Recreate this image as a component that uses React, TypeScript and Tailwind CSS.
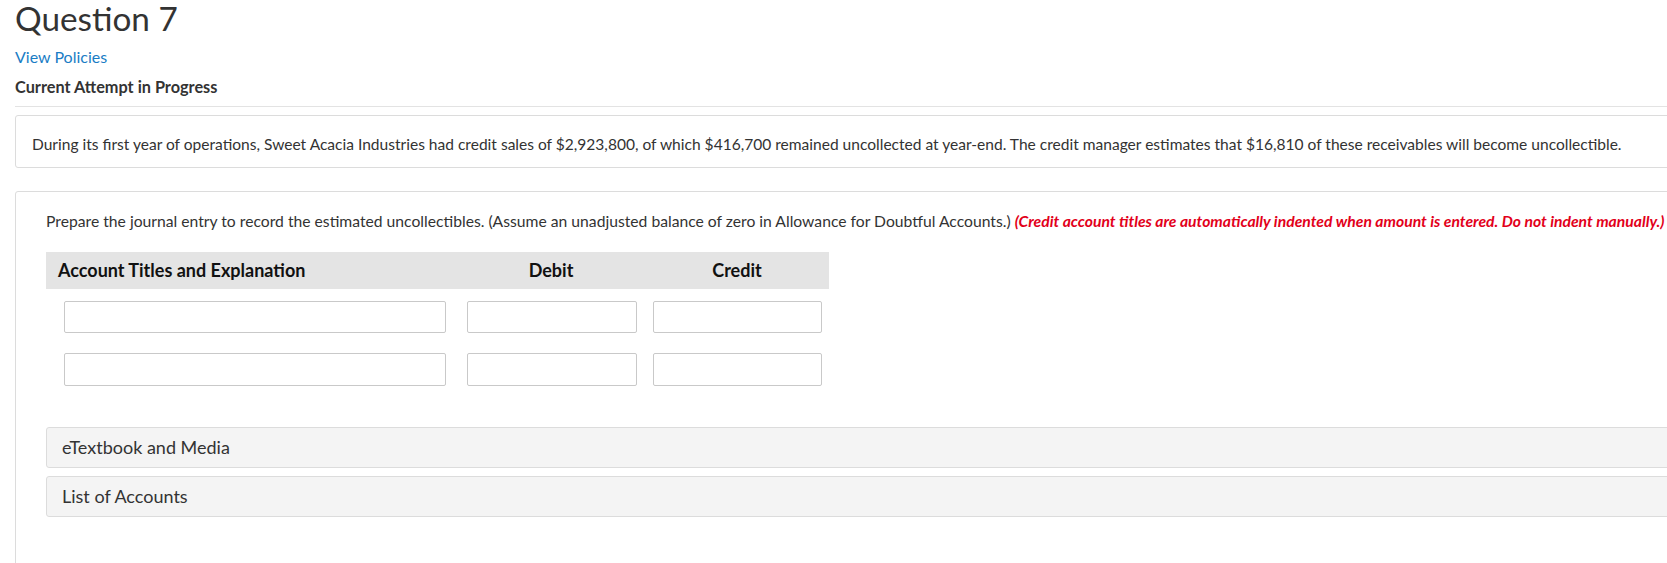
import React from "react";

export default function App() {
  return (
    <div className="w-[1667px] h-[563px] overflow-hidden bg-white font-['Lato','Liberation_Sans',sans-serif] text-[#333]">
      <div className="w-[1720px] pl-[15px] pt-[1px]">
        <h1 className="text-[33.3px] leading-[34px] font-normal text-[#333]">Question 7</h1>
        <div className="mt-[12px] text-[16px] leading-[20px] text-[#1a7dc5]">View Policies</div>
        <div className="mt-[10px] text-[16.3px] leading-[20px] font-bold text-[#333]">Current Attempt in Progress</div>
        <div className="mt-[9px] border-t border-[#e3e3e3]" />

        <div className="mt-[8px] border border-[#dcdcdc] rounded-[3px] pl-[16px] pt-[18px] pb-[13px] text-[15.55px] leading-[20px] whitespace-nowrap">
          During its first year of operations, Sweet Acacia Industries had credit sales of $2,923,800, of which $416,700 remained uncollected at year-end. The credit manager estimates that $16,810 of these receivables will become uncollectible.
        </div>

        <div className="mt-[23px] border border-[#dcdcdc] rounded-[3px] pl-[30px] pt-[19px] pb-[60px]">
          <div className="text-[15.7px] leading-[20px] whitespace-nowrap">
            Prepare the journal entry to record the estimated uncollectibles. (Assume an unadjusted balance of zero in Allowance for Doubtful Accounts.){" "}
            <span className="italic font-bold text-[#e2001a]">
              (Credit account titles are automatically indented when amount is entered. Do not indent manually.)
            </span>
          </div>

          <div className="mt-[21px] w-[783px] h-[37px] bg-[#e4e4e4] flex items-center text-[18px] font-bold text-[#111]">
            <div className="w-[411px] pl-[12px]">Account Titles and Explanation</div>
            <div className="w-[188px] text-center">Debit</div>
            <div className="w-[184px] text-center">Credit</div>
          </div>

          <div className="mt-[12px] flex pl-[18px]">
            <div className="w-[382px] h-[32px] border border-[#c9c9c9] rounded-[2px] bg-white" />
            <div className="ml-[21px] w-[170px] h-[32px] border border-[#c9c9c9] rounded-[2px] bg-white" />
            <div className="ml-[16px] w-[169px] h-[32px] border border-[#c9c9c9] rounded-[2px] bg-white" />
          </div>
          <div className="mt-[20px] flex pl-[18px]">
            <div className="w-[382px] h-[33px] border border-[#c9c9c9] rounded-[2px] bg-white" />
            <div className="ml-[21px] w-[170px] h-[33px] border border-[#c9c9c9] rounded-[2px] bg-white" />
            <div className="ml-[16px] w-[169px] h-[33px] border border-[#c9c9c9] rounded-[2px] bg-white" />
          </div>

          <div className="mt-[41px] h-[41px] bg-[#f4f4f4] border border-[#dcdcdc] rounded-[3px] flex items-center pl-[15px] text-[18px] text-[#333]">
            eTextbook and Media
          </div>
          <div className="mt-[8px] h-[41px] bg-[#f4f4f4] border border-[#dcdcdc] rounded-[3px] flex items-center pl-[15px] text-[18px] text-[#333]">
            List of Accounts
          </div>
        </div>
      </div>
    </div>
  );
}
